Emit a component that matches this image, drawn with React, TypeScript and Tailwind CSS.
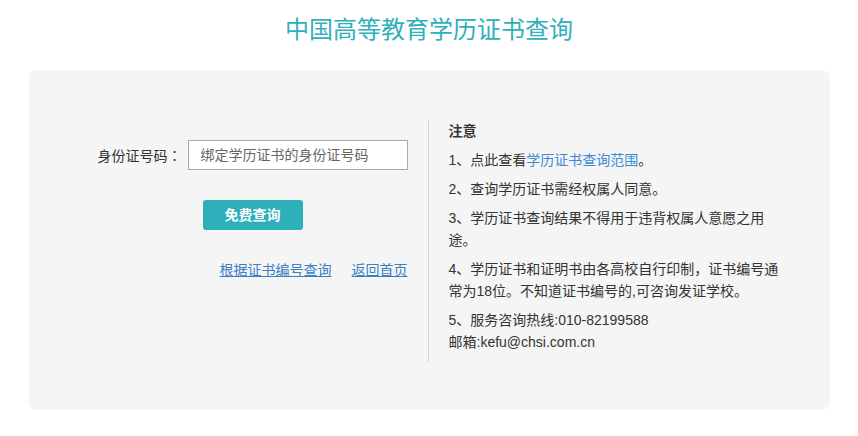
const notes = [
  '2、查询学历证书需经权属人同意。',
  '3、学历证书查询结果不得用于违背权属人意愿之用途。',
  '4、学历证书和证明书由各高校自行印制，证书编号通常为18位。不知道证书编号的,可咨询发证学校。',
]

export default function App() {
  return (
    <div
      className="min-h-[436px] bg-white text-[14px] text-[#333]"
      style={{ fontFamily: '"Liberation Sans", "Noto Sans CJK SC", sans-serif' }}
    >
      {/* Title */}
      <h1 className="pt-[13px] pb-[23px] text-center text-[24px] leading-[34px] text-[#2fb0ba]">
        中国高等教育学历证书查询
      </h1>

      {/* Card */}
      <div className="mx-auto flex w-[801px] rounded-lg bg-[#f5f5f5] pt-[50px] pb-[48px]">
        {/* Query form */}
        <div className="flex w-[399px] justify-end pr-5">
          <div className="w-[310px] pt-5">
            <div className="flex items-center justify-between">
              <label className="leading-[22px]">
                身份证号码
                <span style={{ fontFamily: '"Noto Sans CJK TC", sans-serif' }}>：</span>
              </label>
              <input
                type="text"
                placeholder="绑定学历证书的身份证号码"
                className="h-[30px] w-[220px] border border-[#aaa] bg-white pl-3 text-[14px] outline-none placeholder:text-[#666]"
              />
            </div>
            <div className="mt-[30px] flex justify-center">
              <button className="h-[30px] w-[100px] rounded-[3px] bg-[#2eb0ba] font-semibold text-white">
                免费查询
              </button>
            </div>
            <div className="mt-[31px] flex justify-end gap-5 leading-[18px]">
              <a href="#" className="text-[#3a7fc6] underline">根据证书编号查询</a>
              <a href="#" className="text-[#3a7fc6] underline">返回首页</a>
            </div>
          </div>
        </div>

        {/* Notes */}
        <div className="w-[356px] border-l border-[#d4d4d4] pl-5 pb-[9px] leading-[22px]">
          <p className="mb-[7px] font-bold">注意</p>
          <p className="mb-[7px]">
            1、点此查看<a href="#" className="text-[#3a8ad6]">学历证书查询范围</a>。
          </p>
          {notes.map((note, i) => (
            <p key={i} className="mb-[7px]">{note}</p>
          ))}
          <p>
            5、服务咨询热线:010-82199588
            <br />
            邮箱:kefu@chsi.com.cn
          </p>
        </div>
      </div>
    </div>
  )
}
